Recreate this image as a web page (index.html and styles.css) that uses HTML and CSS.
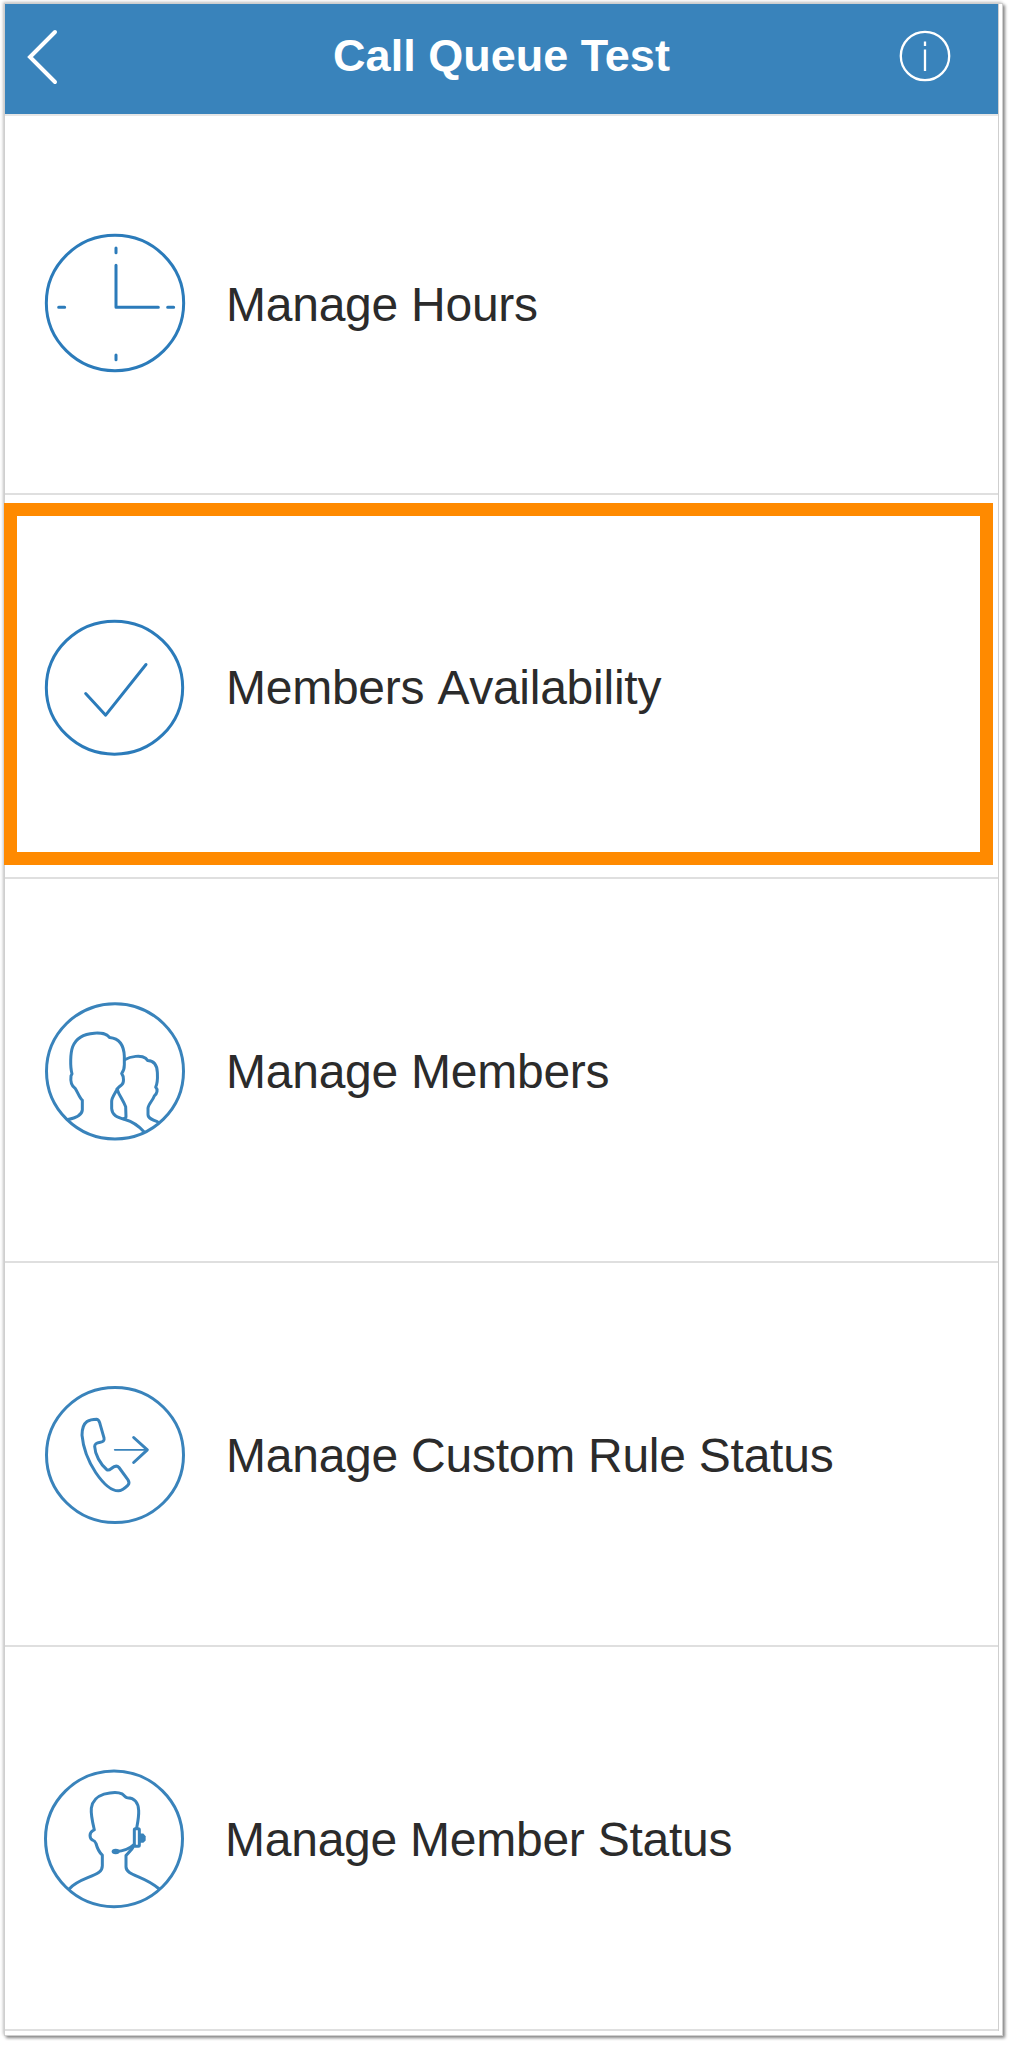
FILE: index.html
```html
<!DOCTYPE html>
<html lang="en">
<head>
    <meta charset="UTF-8">
    <title>Call Queue Test</title>
    <link rel="stylesheet" href="styles.css">
</head>
<body>
    <div class="frame">
        <div class="screen">
            <header class="header">
                <svg class="back-icon" viewBox="0 0 36 60">
                    <path d="M31 7L6 32L31 57"/>
                </svg>
                <h1 class="title">Call Queue Test</h1>
                <svg class="info-icon" viewBox="0 0 52 52">
                    <circle cx="26" cy="26" r="24.2"/>
                    <path d="M26 11.5V16M26 19.5V41"/>
                </svg>
            </header>

            <div class="menu">
                <div class="menu-item">
                    <svg class="menu-icon clock" viewBox="36 36 435 435">
                        <ellipse cx="255" cy="249" rx="206" ry="203"/>
                        <path d="M258 136V262H385M258 84V98M258 405V419M86 262H104M413 262H431"/>
                    </svg>
                    <span class="menu-label">Manage Hours</span>
                </div>

                <div class="menu-item selected">
                    <svg class="menu-icon check" viewBox="36 31.5 435 435">
                        <ellipse cx="253.500" cy="246.500" rx="204.500" ry="199.500"/>
                        <path d="M167 264L227 329L348 177"/>
                    </svg>
                    <span class="menu-label">Members Availability</span>
                </div>

                <div class="menu-item">
                    <svg class="menu-icon" viewBox="36 43.5 435 435">
                        <ellipse cx="255" cy="257.500" rx="205.500" ry="203"/>
                        <path d="M114 402C138 397 156 388 157 373V344C148 337 143 319 135 308C123 300 121 287 123 271L126 265C120 244 121 203 128 184C137 160 158 145 193 143C214 142 229 143 239 156C272 159 282 182 283 213V238C283 248 281 257 275 264C282 273 283 294 274 299C267 303 263 307 260 314C254 326 245 336 245 348V369C246 389 261 396 285 402C309 409 326 421 341 438"/>
                        <path d="M284 223C302 212 333 208 347 218L353 225C372 226 381 238 382 260C383 281 384 291 377 305C384 312 382 324 373 331C369 344 355 356 354 368V387C354 399 369 404 383 409"/>
                        <path d="M261 310C267 330 279 343 287 364L288 394C286 399 284 400 280 400"/>
                    </svg>
                    <span class="menu-label">Manage Members</span>
                </div>

                <div class="menu-item">
                    <svg class="menu-icon" viewBox="36 40.5 435 435">
                        <ellipse cx="255" cy="253.500" rx="205.500" ry="202.500"/>
                        <path d="M171 153C180 147 190 146 200 146C207 147 208 153 210 160L222 202C224 211 219 214 211 215C200 217 194 219 194 228C195 252 211 281 230 297C235 301 239 298 244 294C251 288 261 284 267 291L294 328C298 334 298 339 294 344C285 353 275 361 265 361C243 361 218 337 197 306C174 271 159 228 156 194C156 174 160 161 171 153Z"/>
                        <path class="thin" d="M254 238H350"/>
                        <path d="M311 201L352 238L311 276"/>
                    </svg>
                    <span class="menu-label">Manage Custom Rule Status</span>
                </div>

                <div class="menu-item">
                    <svg class="menu-icon" viewBox="36 37.5 435 435">
                        <ellipse cx="252" cy="250" rx="205.500" ry="203.500"/>
                        <path d="M117 401C143 371 181 368 207 350C215 345 217 339 217 331V299C208 291 202 279 198 264C195 257 192 255 188 254C178 249 177 233 188 226L193 223C188 202 182 178 184 158C187 136 200 123 222 116C240 111 264 109 276 115C283 119 284 126 292 127C315 127 325 144 326 165C327 183 323 202 320 218"/>
                        <path d="M312 270C305 285 294 292 288 300V334C289 361 340 359 386 399"/>
                        <path d="M258 288C280 287 298 280 312 267"/>
                        <rect x="313" y="220" width="15" height="52" rx="3"/>
                        <path class="solid" d="M330 234H340L347 242V255L340 262H330Z"/>
                        <ellipse class="solid" cx="257" cy="288" rx="12" ry="8"/>
                    </svg>
                    <span class="menu-label label-shift">Manage Member Status</span>
                </div>
            </div>
        </div>
    </div>
</body>
</html>
```

FILE: styles.css
```css
body {
    box-sizing: border-box;
    min-height: 2048px;
    margin: 0;
    padding: 4px 0 0 5px;
    background: #fff;
    color: #2b2b2b;
    font-family: "Liberation Sans", Arial, Helvetica, sans-serif;
}
.frame {
    box-sizing: border-box;
    width: 997px;
    height: 2031px;
    background: #fff;
    box-shadow: 0 0 0 1px #cfcfcf, 2px 2px 3px 1px #858585, -1px -1px 3px 1px #c6c6c6;
    clip-path: inset(-4px -8px -6px -5px);
}
.screen {
    width: 993px;
    height: 2027px;
    border-right: 1px solid #cfcfcf;
}
.header {
    box-sizing: border-box;
    display: flex;
    align-items: center;
    height: 112px;
    padding: 0 47px 6px 19px;
    background: #3983bb;
    border-bottom: 2px solid #e6e6e6;
}
.back-icon {
    width: 36px;
    height: 60px;
    margin-top: -3px;
    fill: none;
    stroke: #fff;
    stroke-width: 4;
    stroke-linecap: round;
}
.title {
    flex: 1;
    margin: -2px 0 0 44px;
    font-size: 45px;
    font-weight: bold;
    line-height: 1;
    text-align: center;
    color: #fff;
}
.info-icon {
    width: 52px;
    height: 52px;
    fill: none;
    stroke: #fff;
    stroke-width: 2.3;
}
.menu-item {
    box-sizing: border-box;
    position: relative;
    display: flex;
    align-items: center;
    height: 384px;
    padding: 4px 0 0 36.5px;
    border-bottom: 2px solid #dfdfdf;
}
.menu-item:first-child {
    height: 379px;
    padding-top: 0;
}
/* orange outline drawn over the row */
.selected::after {
    content: "";
    position: absolute;
    box-sizing: border-box;
    top: 8px;
    left: -1px;
    width: 989px;
    height: 362px;
    border: 13px solid #ff8a00;
}
.menu-icon {
    width: 145px;
    height: 145px;
    margin-right: 39.5px;
    flex-shrink: 0;
    fill: none;
    stroke: #3983bb;
    stroke-width: 9;
    stroke-linecap: round;
    stroke-linejoin: round;
}
.clock,
.check {
    stroke: #2b7bba;
}
.menu-icon .thin {
    stroke-width: 5;
}
.menu-icon .solid {
    fill: #3983bb;
    stroke: none;
}
.menu-label {
    font-size: 48px;
    line-height: 56px;
    letter-spacing: -0.25px;
    font-kerning: none;
    white-space: nowrap;
}
.label-shift {
    margin-left: -1px;
}
```
